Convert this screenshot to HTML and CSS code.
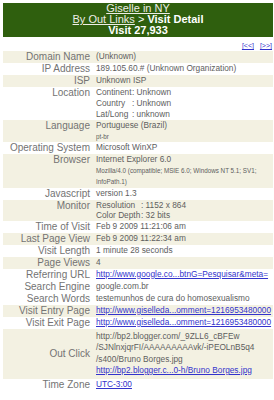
FILE: index.html
```html
<!DOCTYPE html>
<html lang="en">
<head>
    <meta charset="UTF-8">
    <title>Visit Detail</title>
    <link rel="stylesheet" href="styles.css">
</head>
<body>
    <div class="page">
        <div class="banner">
            <a href="#">Giselle in NY</a><br>
            <a href="#">By Out Links</a> &gt; <b>Visit Detail</b><br>
            <b>Visit 27,933</b>
        </div>
        <div class="pager">
            <a href="#">[&lt;&lt;]</a>
            <a href="#">[&gt;&gt;]</a>
        </div>
        <table class="detail">
            <tr class="alt"><td class="key">Domain Name</td><td class="val">(Unknown)</td></tr>
            <tr><td class="key">IP Address</td><td class="val">189.105.60.# (Unknown Organization)</td></tr>
            <tr class="alt"><td class="key">ISP</td><td class="val">Unknown ISP</td></tr>
            <tr><td class="key">Location</td><td class="val loose">
                <span class="sub">Continent</span>: Unknown<br>
                <span class="sub">Country</span>: Unknown<br>
                <span class="sub">Lat/Long</span>: unknown
            </td></tr>
            <tr class="alt"><td class="key">Language</td><td class="val">Portuguese (Brazil)<br><span class="tiny">pt-br</span></td></tr>
            <tr><td class="key">Operating System</td><td class="val">Microsoft WinXP</td></tr>
            <tr class="alt"><td class="key">Browser</td><td class="val">Internet Explorer 6.0<br><span class="tiny">Mozilla/4.0 (compatible; MSIE 6.0; Windows NT 5.1; SV1;<br>InfoPath.1)</span></td></tr>
            <tr><td class="key">Javascript</td><td class="val">version 1.3</td></tr>
            <tr class="alt"><td class="key">Monitor</td><td class="val">
                <span class="sub wide">Resolution</span>: 1152 x 864<br>
                <span class="sub wide">Color Depth</span>: 32 bits
            </td></tr>
            <tr><td class="key">Time of Visit</td><td class="val">Feb 9 2009 11:21:06 am</td></tr>
            <tr class="alt"><td class="key">Last Page View</td><td class="val">Feb 9 2009 11:22:34 am</td></tr>
            <tr><td class="key">Visit Length</td><td class="val">1 minute 28 seconds</td></tr>
            <tr class="alt"><td class="key">Page Views</td><td class="val">4</td></tr>
            <tr><td class="key">Referring URL</td><td class="val"><a href="#">http://www.google.co...btnG=Pesquisar&amp;meta=</a></td></tr>
            <tr><td class="key">Search Engine</td><td class="val">google.com.br</td></tr>
            <tr><td class="key">Search Words</td><td class="val">testemunhos de cura do homosexualismo</td></tr>
            <tr class="alt"><td class="key">Visit Entry Page</td><td class="val"><a href="#">http://www.giselleda...omment=1216953480000</a></td></tr>
            <tr><td class="key">Visit Exit Page</td><td class="val"><a href="#">http://www.giselleda...omment=1216953480000</a></td></tr>
            <tr class="alt"><td class="key mid">Out Click</td><td class="val outclick">http://bp2.blogger.com/_9ZLL6_cBFEw<br>/SJNlnxjqrFI/AAAAAAAAAvk/-iPEOLnB5q4<br>/s400/Bruno Borges.jpg<br><a href="#">http://bp2.blogger.c...0-h/Bruno Borges.jpg</a></td></tr>
            <tr><td class="key">Time Zone</td><td class="val"><a href="#">UTC-3:00</a></td></tr>
        </table>
    </div>
</body>
</html>
```

FILE: styles.css
```css
body {
    margin: 0;
    background: #fff;
    font-family: "Liberation Sans", Arial, sans-serif;
}

.page {
    padding: 3px 1px 0 3px;
}

.banner {
    background: #2f5f0e;
    color: #fff;
    text-align: center;
    font-size: 11px;
    line-height: 11px;
    padding: 0 0 1px;
}

.banner a {
    color: #eeeee6;
}

.pager {
    text-align: right;
    font-size: 7px;
    line-height: 10px;
    padding: 4px 1px 0 0;
    word-spacing: 4px;
}

.pager a {
    color: #3333cc;
}

.detail {
    width: 100%;
    border-collapse: collapse;
    color: #5e5e5e;
}

.detail td {
    padding: 0;
    vertical-align: top;
}

.detail tr.alt {
    background: #f3f1e2;
}

.key {
    width: 87px;
    padding-right: 6px !important;
    text-align: right;
    font-size: 10px;
    line-height: 12px;
    color: #737373;
    white-space: nowrap;
}

.key.mid {
    vertical-align: middle !important;
}

.val {
    font-size: 8.3px;
    line-height: 10.5px;
    white-space: nowrap;
}

.val.loose {
    line-height: 11px;
}

.val.outclick {
    line-height: 11.5px;
    padding: 2px 0 !important;
}

.val a {
    color: #3333cc;
}

.sub {
    display: inline-block;
    width: 36px;
}

.sub.wide {
    width: 45px;
}

.tiny {
    font-size: 6.3px;
}
```
